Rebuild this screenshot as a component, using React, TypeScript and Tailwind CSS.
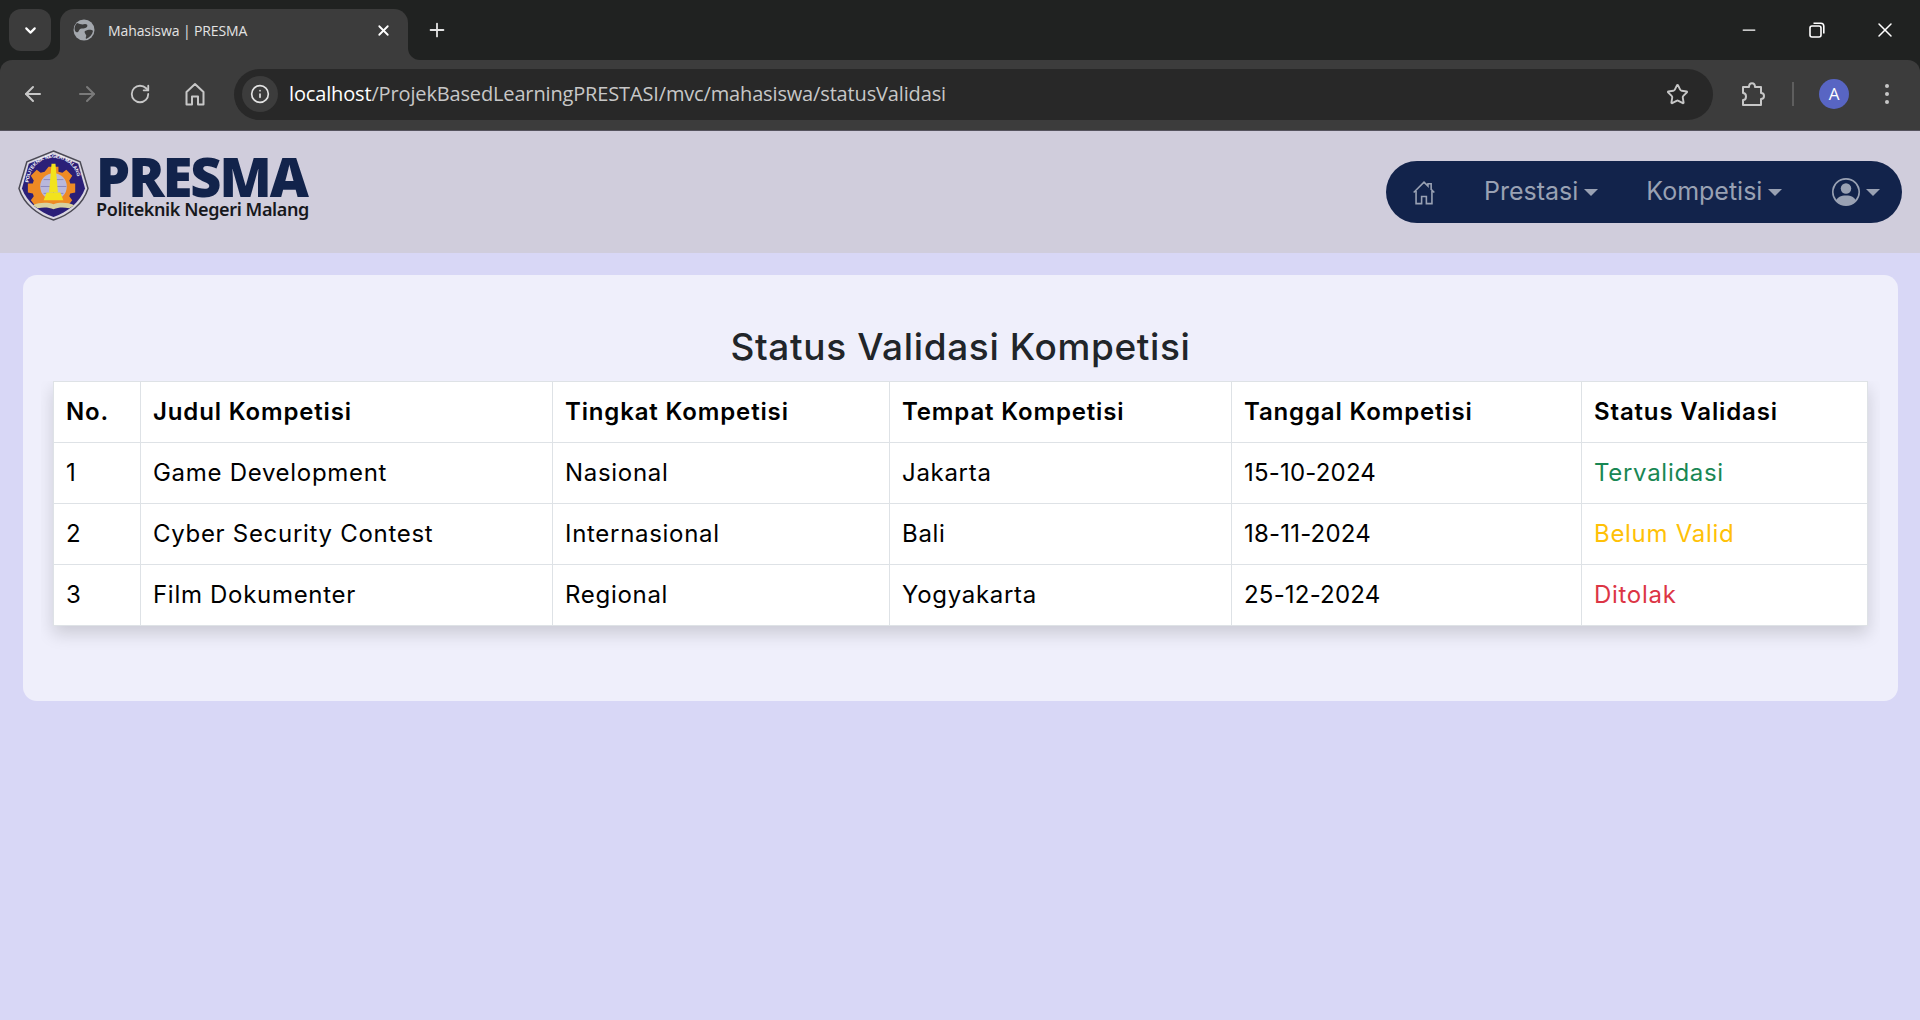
import React from 'react';
import { ArrowLeft, ArrowRight, ChevronDown, Info, Minus, Plus, RotateCw, Star, X } from 'lucide-react';

const poppins = { fontFamily: 'Inter, "Noto Sans", sans-serif' };

const columns = [
  { title: 'No.', width: 'w-[87px]' },
  { title: 'Judul Kompetisi', width: 'w-[412px]' },
  { title: 'Tingkat Kompetisi', width: 'w-[337px]' },
  { title: 'Tempat Kompetisi', width: 'w-[342px]' },
  { title: 'Tanggal Kompetisi', width: 'w-[350px]' },
  { title: 'Status Validasi', width: 'w-[286px]' },
];

const rows = [
  { no: '1', judul: 'Game Development', tingkat: 'Nasional', tempat: 'Jakarta', tanggal: '15-10-2024', status: 'Tervalidasi', color: 'text-[#198754]' },
  { no: '2', judul: 'Cyber Security Contest', tingkat: 'Internasional', tempat: 'Bali', tanggal: '18-11-2024', status: 'Belum Valid', color: 'text-[#ffc107]' },
  { no: '3', judul: 'Film Dokumenter', tingkat: 'Regional', tempat: 'Yogyakarta', tanggal: '25-12-2024', status: 'Ditolak', color: 'text-[#dc3545]' },
];

const GlobeFavicon = () => (
  <svg width="22" height="22" viewBox="0 0 22 22">
    <circle cx="11" cy="11" r="10.5" fill="#a3a7ad" />
    <path d="M4 4c3 1 5 2 8 1 2 0 3 1 2 3-2 2-5 1-7 2-2 2-1 4-4 3-2-2-2-6 1-9zM12 12c3-1 6-2 8 0-1 4-3 6-7 8-1-2 1-3 0-4-1-2-2-3-1-4z" fill="#3c3c3c" />
  </svg>
);

const RestoreIcon = () => (
  <svg width="16" height="16" viewBox="0 0 16 16" fill="none" stroke="#ffffff" strokeWidth="1.6">
    <rect x="1" y="4" width="11" height="11" rx="2" />
    <path d="M4.5 1.2h7.3a3 3 0 0 1 3 3v7.3" />
  </svg>
);

const ChromeHome = () => (
  <svg width="20" height="24" viewBox="0 0 20 24" fill="none" stroke="#c7c7c7" strokeWidth="2" strokeLinejoin="round">
    <path d="M1.5 10 10 2l8.5 8v12.5H13v-8H7v8H1.5z" />
  </svg>
);

const ExtensionIcon = () => (
  <svg width="24" height="26" viewBox="0 0 24 26" fill="none" stroke="#c7c7c7" strokeWidth="2" strokeLinejoin="round">
    <path d="M2 6h6c0-5 6-5 6 0h6v6c4 0 4 6 0 6v6H2v-5c4 0 4-7 0-7z" />
  </svg>
);

const Emblem = () => (
  <svg width="71" height="71" viewBox="0 0 72 72">
    <path d="M36 1 L63 12 L71 39 C66 55 52 66 36 71 C20 66 6 55 1 39 L9 12 Z" fill="#d9d6e0" stroke="#4b4a55" strokeWidth="1.5" />
    <path d="M36 4 L61 14 L68 39 C63 53 50 63 36 68 C22 63 9 53 4 39 L11 14 Z" fill="#2b1f78" />
    <path id="emblem-arc" d="M11 33 A25 25 0 0 1 61 33" fill="none" />
    <text fontSize="5" fill="#ffffff" fontFamily="Liberation Sans, sans-serif" fontWeight="700" textLength="72">
      <textPath href="#emblem-arc">POLITEKNIK NEGERI MALANG</textPath>
    </text>
    <path d="M31 17h10v5l4 1 4-3 6 6-3 5 1 3h5v9l-5 1-1 3 3 4-4 5H17l-4-5 3-4-1-3-5-1v-9h5l1-3-3-5 6-6 4 3 4-1z" fill="#ee8a24" />
    <circle cx="36" cy="37" r="13.5" fill="#b9b8dc" />
    <path d="M23 37h26M36 24v26M26 30h20M26 44h20" stroke="#7f7db8" strokeWidth="0.8" />
    <path d="M34 14h4l2.5 29h-9z" fill="#f2e31d" />
    <path d="M26 51l3-8h14l3 8z" fill="#f2e31d" />
    <path d="M15 56c7-3 15-3 21-1 6-2 14-2 21 1l-5 3c-6-1-11-1-16 1-5-2-10-2-16-1z" fill="#d8d2a0" />
  </svg>
);

const HomeIcon = () => (
  <svg width="26" height="27" viewBox="0 0 16 17" fill="none" stroke="#99a1b3" strokeWidth="1">
    <path d="M1.5 8.5 8 2l2.5 2.5V3h2v3.5l2 2M3 7.5V15.5h3.5v-4.5h3v4.5H13V7.5" />
  </svg>
);

const UserIcon = () => (
  <svg width="28" height="28" viewBox="0 0 16 16" fill="#99a1b3">
    <path d="M11 6a3 3 0 1 1-6 0 3 3 0 0 1 6 0" />
    <path fillRule="evenodd" d="M0 8a8 8 0 1 1 16 0A8 8 0 0 1 0 8m8-7a7 7 0 0 0-5.468 11.37C3.242 11.226 4.805 10 8 10s4.757 1.225 5.468 2.37A7 7 0 0 0 8 1" />
  </svg>
);

const Caret = () => <span className="ml-[6px] inline-block h-0 w-0 border-x-[7px] border-t-[7px] border-x-transparent border-t-[#99a1b3]" />;

const BrowserChrome = () => (
  <div className="shrink-0 bg-[#202221]" style={{ fontFamily: '"Open Sans", "Noto Sans", sans-serif' }}>
    <div className="flex h-[60px] items-start pl-[9px]">
      <button className="mt-[9px] flex h-[42px] w-[42px] items-center justify-center rounded-[12px] bg-[#3c3c3c] text-white">
        <ChevronDown className="h-[17px] w-[17px]" strokeWidth={3} />
      </button>
      <div className="relative ml-[9px] mt-[9px] flex h-[51px] w-[348px] items-center rounded-t-[14px] bg-[#3c3c3c] pb-[9px] pl-[13px] pr-[16px]">
        <span className="absolute -left-[12px] bottom-0 h-[12px] w-[12px] bg-[#3c3c3c]">
          <span className="block h-full w-full rounded-br-[12px] bg-[#202221]" />
        </span>
        <span className="absolute -right-[12px] bottom-0 h-[12px] w-[12px] bg-[#3c3c3c]">
          <span className="block h-full w-full rounded-bl-[12px] bg-[#202221]" />
        </span>
        <GlobeFavicon />
        <span className="ml-[13px] flex-1 text-[14px] tracking-[-0.1px] text-[#e3e3e3]">Mahasiswa | PRESMA</span>
        <X className="h-[17px] w-[17px] text-white" strokeWidth={2.5} />
      </div>
      <Plus className="ml-[18px] mt-[19px] h-[22px] w-[22px] text-[#e3e3e3]" strokeWidth={2} />
      <div className="flex-1" />
      <div className="mt-[18px] flex items-center pr-[23px] text-white">
        <Minus className="h-[20px] w-[20px]" strokeWidth={1.5} />
        <span className="ml-[50px]"><RestoreIcon /></span>
        <X className="ml-[48px] h-[24px] w-[24px]" strokeWidth={1.5} />
      </div>
    </div>
    <div className="flex h-[70px] items-center rounded-t-[12px] bg-[#3c3c3c] pb-[2px] pl-[21px]">
      <ArrowLeft className="h-[24px] w-[24px] text-[#c7c7c7]" strokeWidth={2} />
      <ArrowRight className="ml-[30px] h-[24px] w-[24px] text-[#7a7a7a]" strokeWidth={2} />
      <RotateCw className="ml-[30px] h-[22px] w-[22px] text-[#c7c7c7]" strokeWidth={2} />
      <span className="ml-[34px]"><ChromeHome /></span>
      <div className="ml-[29px] flex h-[51px] w-[1479px] items-center rounded-full bg-[#282828] pl-[8px] pr-[24px]">
        <div className="flex h-[36px] w-[36px] items-center justify-center rounded-full bg-[#3c3c3c]">
          <Info className="h-[20px] w-[20px] text-[#e3e3e3]" strokeWidth={2} />
        </div>
        <span className="ml-[11px] flex-1 text-[20px] tracking-[-0.15px] text-[#c7c7c7]">
          <span className="text-white">localhost</span>/ProjekBasedLearningPRESTASI/mvc/mahasiswa/statusValidasi
        </span>
        <Star className="h-[23px] w-[23px] text-[#c7c7c7]" strokeWidth={2} />
      </div>
      <span className="ml-[28px]"><ExtensionIcon /></span>
      <span className="ml-[27px] h-[24px] w-[2px] bg-[#5e5e5e]" />
      <span className="ml-[25px] flex h-[30px] w-[30px] items-center justify-center rounded-full bg-[#5865c3] text-[17px] text-white">A</span>
      <span className="ml-[36px] flex flex-col gap-[4px]">
        <span className="h-[4px] w-[4px] rounded-full bg-[#c7c7c7]" />
        <span className="h-[4px] w-[4px] rounded-full bg-[#c7c7c7]" />
        <span className="h-[4px] w-[4px] rounded-full bg-[#c7c7c7]" />
      </span>
    </div>
  </div>
);

const Navbar = () => (
  <nav className="flex h-[123px] shrink-0 items-center justify-between border-t border-[#55535e] bg-[#d0cddc] pl-[18px] pr-[18px]">
    <div className="mb-[11px] flex items-center gap-[7px]">
      <span className="mb-[3px]"><Emblem /></span>
      <div className="flex flex-col" style={{ fontFamily: '"Noto Sans", sans-serif' }}>
        <span className="text-[54px] font-black leading-[44px] tracking-[-2px] text-[#12234b]">PRESMA</span>
        <span className="text-[18px] font-semibold leading-[22px] tracking-[-0.4px] text-[#17181c]">Politeknik Negeri Malang</span>
      </div>
    </div>
    <div className="flex h-[62px] w-[516px] items-center rounded-full bg-[#12234b] pl-[25px] text-[#99a1b3]" style={poppins}>
      <HomeIcon />
      <span className="ml-[47px] flex items-center text-[25px]">Prestasi<Caret /></span>
      <span className="ml-[48px] flex items-center text-[25px]">Kompetisi<Caret /></span>
      <span className="ml-[50px] flex items-center"><UserIcon /><Caret /></span>
    </div>
  </nav>
);

export default function App() {
  return (
    <div className="flex h-[1020px] w-[1920px] flex-col overflow-hidden bg-[#d8d7f6]" style={poppins}>
      <BrowserChrome />
      <Navbar />
      <main className="px-[23px] pt-[22px]">
        <div className="h-[426px] w-[1875px] rounded-[14px] bg-[#efeffb] px-[18px] pt-[48px]">
          <h1 className="text-center text-[37px] font-medium leading-[48px] tracking-[0.64px] text-[#212529]">Status Validasi Kompetisi</h1>
          <div className="mt-[10px] overflow-hidden pb-[25px] pl-[12px] pr-[13px]">
            <table className="w-[1814px] table-fixed border-collapse bg-white text-[24px] tracking-[0.7px] text-black shadow-[0_8px_16px_rgba(0,0,0,0.15)]">
              <thead>
                <tr>
                  {columns.map((c) => (
                    <th key={c.title} className={`${c.width} h-[61px] border border-[#dee2e6] px-[12px] text-left font-semibold tracking-[0.85px]`}>{c.title}</th>
                  ))}
                </tr>
              </thead>
              <tbody>
                {rows.map((r) => (
                  <tr key={r.no}>
                    <td className="h-[61px] border border-[#dee2e6] px-[12px]">{r.no}</td>
                    <td className="h-[61px] border border-[#dee2e6] px-[12px]">{r.judul}</td>
                    <td className="h-[61px] border border-[#dee2e6] px-[12px]">{r.tingkat}</td>
                    <td className="h-[61px] border border-[#dee2e6] px-[12px]">{r.tempat}</td>
                    <td className="h-[61px] border border-[#dee2e6] px-[12px] tracking-[0.2px]">{r.tanggal}</td>
                    <td className={`h-[61px] border border-[#dee2e6] px-[12px] ${r.color}`}>{r.status}</td>
                  </tr>
                ))}
              </tbody>
            </table>
          </div>
        </div>
      </main>
    </div>
  );
}
